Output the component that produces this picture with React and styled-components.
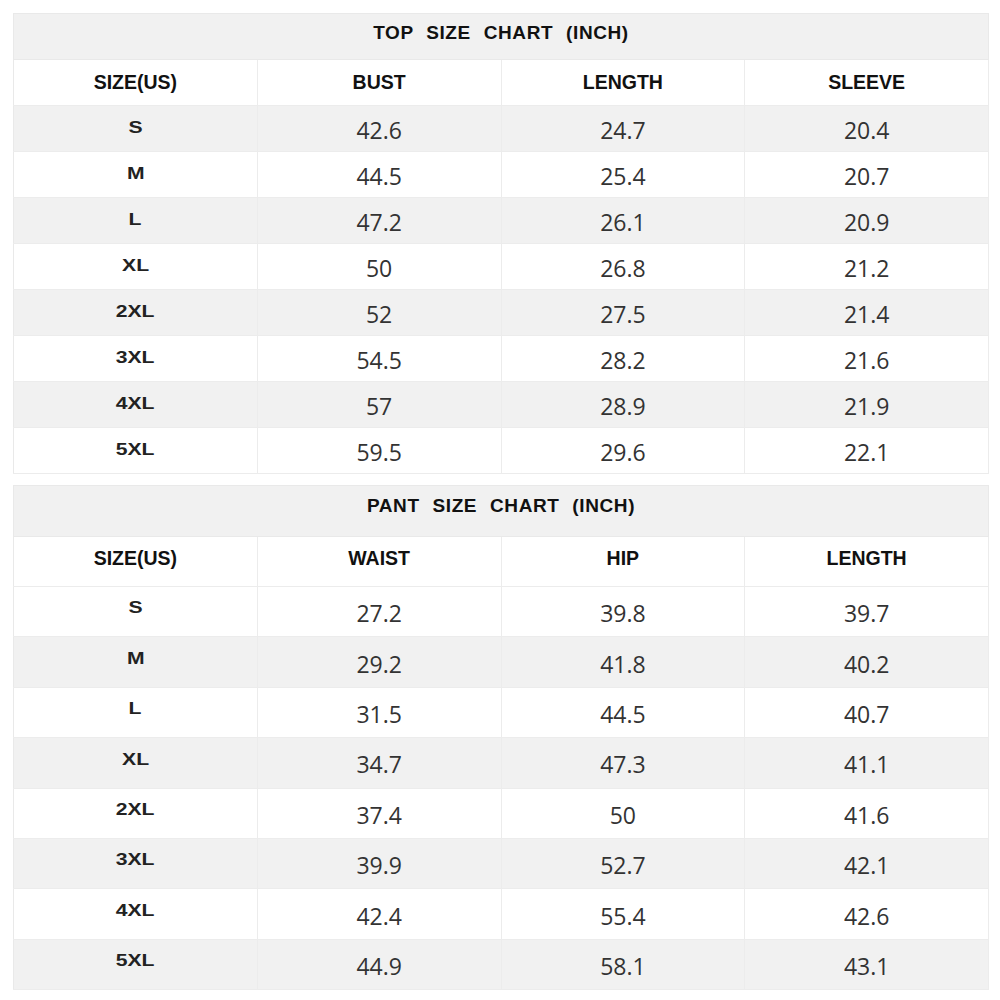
import React from 'react';
import styled, { createGlobalStyle } from 'styled-components';

const GlobalStyle = createGlobalStyle`
  html, body {
    margin: 0;
    padding: 0;
    background: #fff;
  }
  th, td {
    box-sizing: border-box;
  }
`;

const Page = styled.div`
  width: 1000px;
  padding: 13px 11px 0 13px;
  box-sizing: border-box;
  display: flex;
  flex-direction: column;
  gap: 11px;
`;

const Chart = styled.table`
  width: 976px;
  border-collapse: collapse;
  table-layout: fixed;
  border: 1px solid #e9e9e9;
`;

const TitleCell = styled.th`
  height: ${props => props.$h}px;
  padding: 0 0 ${props => props.$lift}px;
  background: #f1f1f1;
  color: #111;
  font-family: "Liberation Sans", Arial, sans-serif;
  font-weight: 700;
  font-size: 19px;
  letter-spacing: 0.6px;
  word-spacing: 7px;
  text-align: center;
  border-bottom: 1px solid #e9e9e9;
`;

const HeadCell = styled.th`
  height: ${props => props.$h}px;
  padding: 0 0 ${props => props.$lift}px;
  background: #fff;
  color: #111;
  font-family: "Liberation Sans", Arial, sans-serif;
  font-weight: 700;
  font-size: 19.5px;
  line-height: 1;
  text-align: center;
  border-right: 1px solid #ececec;
  border-bottom: 1px solid #ececec;
`;

const Row = styled.tr`
  background: ${props => (props.$shaded ? '#f1f1f1' : '#fff')};
`;

const SizeCell = styled.td`
  height: ${props => props.$h}px;
  padding: 0 0 ${props => props.$lift}px;
  color: #222;
  font-family: "Liberation Sans", Arial, sans-serif;
  font-weight: 700;
  font-size: 16.5px;
  line-height: 1;
  text-align: center;
  border-right: 1px solid #ececec;
  border-bottom: 1px solid #ececec;
`;

const SizeLabel = styled.span`
  display: inline-block;
  transform: scaleX(1.28);
`;

const ValueCell = styled.td`
  height: ${props => props.$h}px;
  padding: 4px 0 0;
  color: #333;
  font-family: "Open Sans", "Noto Sans", sans-serif;
  font-size: 23px;
  line-height: 1;
  text-align: center;
  border-right: 1px solid #ececec;
  border-bottom: 1px solid #ececec;
`;

const charts = [
  {
    title: 'TOP SIZE CHART (INCH)',
    cols: ['SIZE(US)', 'BUST', 'LENGTH', 'SLEEVE'],
    titleH: 46,
    headH: 46,
    rowH: 46,
    titleLift: 7,
    headLift: 0,
    sizeLift: 2,
    firstShaded: true,
    rows: [
      ['S', '42.6', '24.7', '20.4'],
      ['M', '44.5', '25.4', '20.7'],
      ['L', '47.2', '26.1', '20.9'],
      ['XL', '50', '26.8', '21.2'],
      ['2XL', '52', '27.5', '21.4'],
      ['3XL', '54.5', '28.2', '21.6'],
      ['4XL', '57', '28.9', '21.9'],
      ['5XL', '59.5', '29.6', '22.1'],
    ],
  },
  {
    title: 'PANT SIZE CHART (INCH)',
    cols: ['SIZE(US)', 'WAIST', 'HIP', 'LENGTH'],
    titleH: 51,
    headH: 50,
    rowH: 50.4,
    titleLift: 10,
    headLift: 6,
    sizeLift: 8,
    firstShaded: false,
    rows: [
      ['S', '27.2', '39.8', '39.7'],
      ['M', '29.2', '41.8', '40.2'],
      ['L', '31.5', '44.5', '40.7'],
      ['XL', '34.7', '47.3', '41.1'],
      ['2XL', '37.4', '50', '41.6'],
      ['3XL', '39.9', '52.7', '42.1'],
      ['4XL', '42.4', '55.4', '42.6'],
      ['5XL', '44.9', '58.1', '43.1'],
    ],
  },
];

const SizeChart = ({ chart }) => (
  <Chart>
    <thead>
      <tr>
        <TitleCell colSpan={4} $h={chart.titleH} $lift={chart.titleLift}>
          {chart.title}
        </TitleCell>
      </tr>
      <tr>
        {chart.cols.map(col => (
          <HeadCell key={col} $h={chart.headH} $lift={chart.headLift}>{col}</HeadCell>
        ))}
      </tr>
    </thead>
    <tbody>
      {chart.rows.map((row, i) => (
        <Row key={row[0]} $shaded={(i % 2 === 0) === chart.firstShaded}>
          <SizeCell $h={chart.rowH} $lift={chart.sizeLift}>
            <SizeLabel>{row[0]}</SizeLabel>
          </SizeCell>
          {row.slice(1).map((v, j) => (
            <ValueCell key={j} $h={chart.rowH}>{v}</ValueCell>
          ))}
        </Row>
      ))}
    </tbody>
  </Chart>
);

const App = () => (
  <>
    <GlobalStyle />
    <Page>
      {charts.map(chart => (
        <SizeChart key={chart.title} chart={chart} />
      ))}
    </Page>
  </>
);

export default App;
